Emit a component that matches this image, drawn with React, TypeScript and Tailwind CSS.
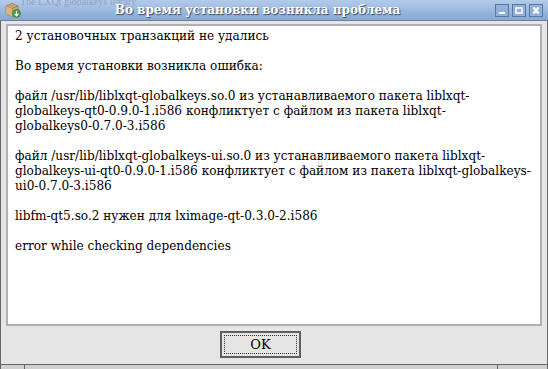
import React from "react";

const serif = { fontFamily: '"DejaVu Serif", "Liberation Serif", serif' };

function PkgIcon() {
  return (
    <svg width="17" height="16" viewBox="0 0 17 16">
      <path d="M2 4 L8 1.5 L14 4 L14 12 L8 14.5 L2 12 Z" fill="#c9a877" stroke="#9a7a4c" strokeWidth="0.8" />
      <path d="M2 4 L8 6.5 L14 4" fill="none" stroke="#9a7a4c" strokeWidth="0.8" />
      <path d="M8 6.5 L8 14.5" stroke="#a88658" strokeWidth="0.8" />
      <path d="M2 4 L8 6.5 L8 14.5 L2 12 Z" fill="#d9bb8c" opacity="0.7" />
      <circle cx="12.5" cy="11.5" r="4" fill="#3fa33f" stroke="#2a7a2a" strokeWidth="0.6" />
      <path d="M12.5 9 L12.5 13.5 M10.6 11.8 L12.5 13.8 L14.4 11.8" stroke="#fff" strokeWidth="1.2" fill="none" />
    </svg>
  );
}

function TBtn({ kind }: { kind: "min" | "max" | "close" }) {
  return (
    <div className="w-[14px] h-[13px] border border-[#5877a3] bg-[#93b0d8] flex items-center justify-center">
      <svg width="10" height="9" viewBox="0 0 10 9">
        {kind === "min" && <rect x="2" y="6" width="6" height="2" fill="#fff" />}
        {kind === "max" && <rect x="2" y="2" width="6" height="5" fill="none" stroke="#fff" strokeWidth="1.5" />}
        {kind === "close" && <path d="M2.5 1.5 L7.5 7.5 M7.5 1.5 L2.5 7.5" stroke="#fff" strokeWidth="2" />}
      </svg>
    </div>
  );
}

export default function App() {
  const lines: string[][] = [
    ["2 установочных транзакций не удались"],
    ["Во время установки возникла ошибка:"],
    [
      "файл /usr/lib/liblxqt-globalkeys.so.0 из устанавливаемого пакета liblxqt-",
      "globalkeys-qt0-0.9.0-1.i586 конфликтует с файлом из пакета liblxqt-",
      "globalkeys0-0.7.0-3.i586",
    ],
    [
      "файл /usr/lib/liblxqt-globalkeys-ui.so.0 из устанавливаемого пакета liblxqt-",
      "globalkeys-ui-qt0-0.9.0-1.i586 конфликтует с файлом из пакета liblxqt-globalkeys-",
      "ui0-0.7.0-3.i586",
    ],
    ["libfm-qt5.so.2 нужен для lximage-qt-0.3.0-2.i586"],
    ["error while checking dependencies"],
  ];
  return (
    <div className="w-[548px] h-[369px] flex flex-col bg-[#e5e5e5] overflow-hidden" style={serif}>
      <div className="relative h-[21px] bg-gradient-to-b from-[#b3cbe9] to-[#86a8d4] border-b border-[#6b7f9a] flex items-center shrink-0 overflow-hidden">
        <div
          className="absolute left-[20px] top-[-4px] text-[10px] leading-[12px] text-[#8a9cb8] opacity-80 whitespace-nowrap"
          style={{ fontFamily: '"Liberation Serif", serif' }}
        >
          The LXQt globalkeys library
        </div>
        <div className="relative pl-[4px] w-[22px] flex items-center">
          <PkgIcon />
        </div>
        <div className="relative flex-1 text-center text-white font-bold text-[12px] whitespace-nowrap [text-shadow:1px_1px_1px_#3a4a66]">
          Во время установки возникла проблема
        </div>
        <div className="flex gap-[3px] pr-[5px] pl-[2px]">
          <TBtn kind="min" />
          <TBtn kind="max" />
          <TBtn kind="close" />
        </div>
      </div>
      <div className="flex-1 flex flex-col border-l border-r border-[#666] px-[5px] pt-[3px]">
        <div className="h-[302px] bg-white border-2 border-[#b0b0b0] pl-[7px] pt-[3px] text-[12.1px] leading-[15px] text-black whitespace-nowrap">
          {lines.map((p, i) => (
            <div key={i} className="mb-[15px]">
              {p.map((l, j) => (
                <div key={j}>{l}</div>
              ))}
            </div>
          ))}
        </div>
        <div className="flex pt-[5px] pl-[214px]">
          <button className="w-[81px] h-[27px] border-2 border-[#5e5e5e] bg-[#e5e5e5] p-[2px]">
            <div className="w-full h-full border border-dotted border-[#333] flex items-center justify-center text-[13px] text-black">
              OK
            </div>
          </button>
        </div>
      </div>
      <div className="h-[5px] border-t border-[#666] bg-[#d0d0d0] flex shrink-0">
        <div className="w-[25px] border-r border-[#666] border-l" />
        <div className="flex-1" />
        <div className="w-[51px] border-l border-[#666] border-r" />
      </div>
    </div>
  );
}
